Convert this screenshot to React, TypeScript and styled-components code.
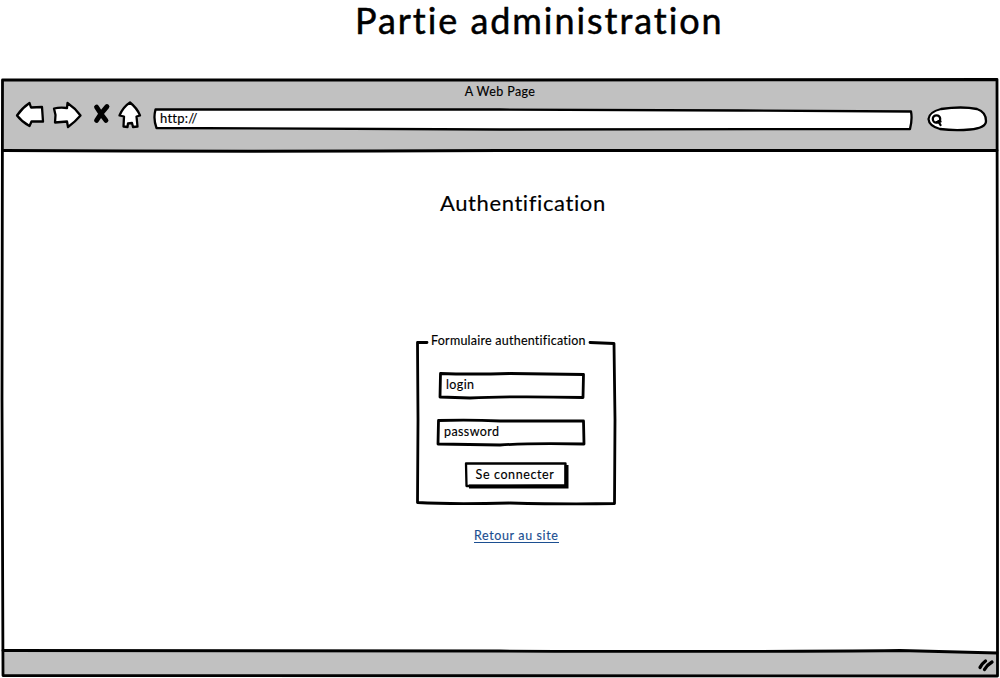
import React from 'react';
import styled, { createGlobalStyle } from 'styled-components';

const Global = createGlobalStyle`
  * { box-sizing: border-box; }
  body { margin: 0; background: #fff; color: #000; font-family: Lato, "Open Sans", sans-serif; -webkit-text-stroke: 0.15px currentColor; }
`;

const Page = styled.div`
  width: 1000px;
  height: 678px;
  display: flex;
  flex-direction: column;
`;

const Heading = styled.h1`
  margin: 0;
  height: 78px;
  padding-left: 355px;
  font-size: 36px;
  line-height: 41px;
  font-weight: 400;
  letter-spacing: 1.94px;
  white-space: nowrap;
  -webkit-text-stroke: 0.5px #000;
`;

const Window = styled.main`
  position: relative;
  height: 600px;
  display: flex;
  flex-direction: column;
  padding: 2px;
`;

/* Hand-drawn strokes lying over the box they belong to. */
const Ink = styled.svg`
  position: absolute;
  inset: 0;
  width: 100%;
  height: 100%;
  overflow: visible;
  pointer-events: none;
  fill: none;
  stroke: #000;
  stroke-width: 2.8;
  stroke-linejoin: round;
  stroke-linecap: round;
`;

const FineInk = styled(Ink)`
  stroke-width: 2.3;
`;

const ShadowPath = styled.path`
  stroke-width: 4;
  stroke-linecap: butt;
  stroke-linejoin: miter;
`;

const Chrome = styled.header`
  height: 71px;
  background: #c1c1c1;
`;

const WindowTitle = styled.div`
  height: 22px;
  text-align: center;
  font-size: 12.5px;
  line-height: 24px;
  letter-spacing: 0.4px;
`;

const Toolbar = styled.div`
  display: flex;
  align-items: flex-start;
  padding-left: 13px;
`;

const Icon = styled.svg<{ $gap: number }>`
  flex: none;
  margin-right: ${(p) => p.$gap}px;
  overflow: visible;
  fill: #fff;
  stroke: #000;
  stroke-width: 2.3;
  stroke-linejoin: round;
  stroke-linecap: round;
`;

const StopPath = styled.path`
  fill: none;
  stroke-width: 4.8;
`;

const Grip = styled(Icon)`
  margin-top: 4px;
  stroke-width: 3.3;
`;

const Address = styled.div`
  position: relative;
  width: 760px;
  height: 22px;
  margin: 6px 14px 0 0;
  padding-left: 7px;
  font-size: 13px;
  line-height: 21px;
  letter-spacing: 0.25px;
`;

const AddressText = styled.span`
  position: relative;
`;

const Content = styled.section`
  height: 501px;
  display: flex;
  flex-direction: column;
  align-items: flex-start;
`;

const Subtitle = styled.h2`
  margin: 37px 0 0 438px;
  height: 30px;
  font-size: 22px;
  line-height: 30px;
  font-weight: 400;
  letter-spacing: 0.6px;
  white-space: nowrap;
`;

const Form = styled.form`
  position: relative;
  width: 200px;
  height: 164px;
  margin: 124px 0 0 414px;
`;

const Legend = styled.div`
  height: 0;
  margin-left: 15px;
  font-size: 12.5px;
  line-height: 0;
  letter-spacing: 0.24px;
  white-space: nowrap;
  position: relative;
  top: -1px;
`;

const Field = styled.div<{ $left: number; $top: number; $width: number }>`
  position: relative;
  width: ${(p) => p.$width}px;
  height: 26px;
  margin: ${(p) => p.$top}px 0 0 ${(p) => p.$left}px;
  padding-left: 7px;
  font-size: 12.5px;
  line-height: 26px;
  letter-spacing: 0.4px;
`;

const Submit = styled.button`
  position: relative;
  display: block;
  width: 104px;
  height: 26px;
  margin: 17px 0 0 49px;
  padding: 0 4px 0 0;
  border: 0;
  background: none;
  color: #000;
  font: 12.5px/22px Lato, sans-serif;
  letter-spacing: 0.6px;
  white-space: nowrap;
`;

const BackLink = styled.a`
  margin: 21px 0 0 472px;
  height: 16px;
  border-bottom: 1px solid #1c4f91;
  color: #1c4f91;
  font-size: 12.5px;
  line-height: 17px;
  letter-spacing: 0.62px;
  text-decoration: none;
  white-space: nowrap;
`;

const StatusBar = styled.footer`
  height: 24px;
  display: flex;
  justify-content: flex-end;
  background: #c1c1c1;
`;

export default function App() {
  return (
    <Page>
      <Global />
      <Heading>Partie administration</Heading>
      <Window>
        <Chrome>
          <WindowTitle>A Web Page</WindowTitle>
          <Toolbar>
            <Icon $gap={8} width="30" height="28" viewBox="15 102 30 28">
              <path d="M17 115.5Q22 108 29.5 103L31 107.5 42 107 43 121.5 31.5 121.5 29.5 126Q22 122 17 115.5Z" />
            </Icon>
            <Icon $gap={10} width="30" height="28" viewBox="53 102 30 28">
              <path d="M54 108.5Q60 107 67 108L67.5 103Q75 108 80.5 115.5Q75 122 68 127L67 121.5 55 122.5 55.5 115Z" />
            </Icon>
            <Icon $gap={4} width="20" height="28" viewBox="93 102 20 28">
              <StopPath d="M96.5 107Q100 113 106 120.5M107 106.5Q101 113 96.5 120.5" />
            </Icon>
            <Icon $gap={12} width="24" height="28" viewBox="117 102 24 28">
              <path d="M130 102.5Q137 108 140 115.5L136.5 116.5 137.5 126.5 133 127 132 123 128 123.5 127.5 127 123.5 126.5 124 116.5 119.5 115.5Q123 107 130 102.5Z" />
            </Icon>
            <Address>
              <FineInk viewBox="153 108 760 22">
                <path fill="#fff" d="M155.5 109.5 500 109.5 740 110.5 911 111.5Q912.5 119 910 129L500 129.5 156.5 128Q153 119 155.5 109.5Z" />
              </FineInk>
              <AddressText>http://</AddressText>
            </Address>
            <Icon $gap={0} width="62" height="28" viewBox="927 102 62 28">
              <path d="M941 109Q962 106 977 109Q986 112 986 121Q986 128 970 129.5Q955 131 940 129Q929 126 928.5 119Q929 112 941 109Z" />
              <circle cx="936.5" cy="119" r="3.7" />
              <path d="M938.2 121.3 940.5 125M936.5 122.2 940.5 121.5" />
            </Icon>
          </Toolbar>
        </Chrome>
        <Content>
          <Subtitle>Authentification</Subtitle>
          <Form>
            <Ink viewBox="416 342 200 164">
              <path d="M427 342.5H417.5L418 420 417.5 502.5Q450 504.5 510 503Q570 504.5 614.5 503.5L615 420 614 343.5 590 342.5" />
            </Ink>
            <Legend>Formulaire authentification</Legend>
            <Field $left={23} $top={30} $width={147}>
              <Ink viewBox="439 372 147 26">
                <path d="M440.5 373.5Q470 374.5 510 373.5L583.5 374.5 583 397.5Q510 396 470 398L440 397Z" />
              </Ink>
              login
            </Field>
            <Field $left={21} $top={21} $width={149}>
              <Ink viewBox="437 419 149 26">
                <path d="M438.5 420.5Q470 419.5 500 421L583.5 421 584 444Q530 443 500 445L438 444Z" />
              </Ink>
              password
            </Field>
            <Submit type="button">
              <Ink viewBox="465 462 104 26">
                <ShadowPath d="M566.5 465V486.5H469" />
              </Ink>
              <FineInk viewBox="465 462 104 26">
                <path d="M466 463.5 565.5 463.5 565.5 485.5 466.5 486Z" />
              </FineInk>
              Se connecter
            </Submit>
          </Form>
          <BackLink>Retour au site</BackLink>
        </Content>
        <StatusBar>
          <Grip $gap={2} width="18" height="18" viewBox="978 656 18 18">
            <path d="M980 667.5Q981.5 664 985.5 661M984.5 669.5Q987 665 992 662" />
          </Grip>
        </StatusBar>
        <Ink viewBox="0 78 1000 600">
          <path d="M2.5 80Q300 79 500 80L997 79.5 997.5 380 997.5 676Q500 676.5 3 675.5L2 400Z" />
          <path d="M3 150.5Q250 152 500 150.5L997 150.5M3 650.5Q250 650 500 651T900 650.5L997 653" />
        </Ink>
      </Window>
    </Page>
  );
}
